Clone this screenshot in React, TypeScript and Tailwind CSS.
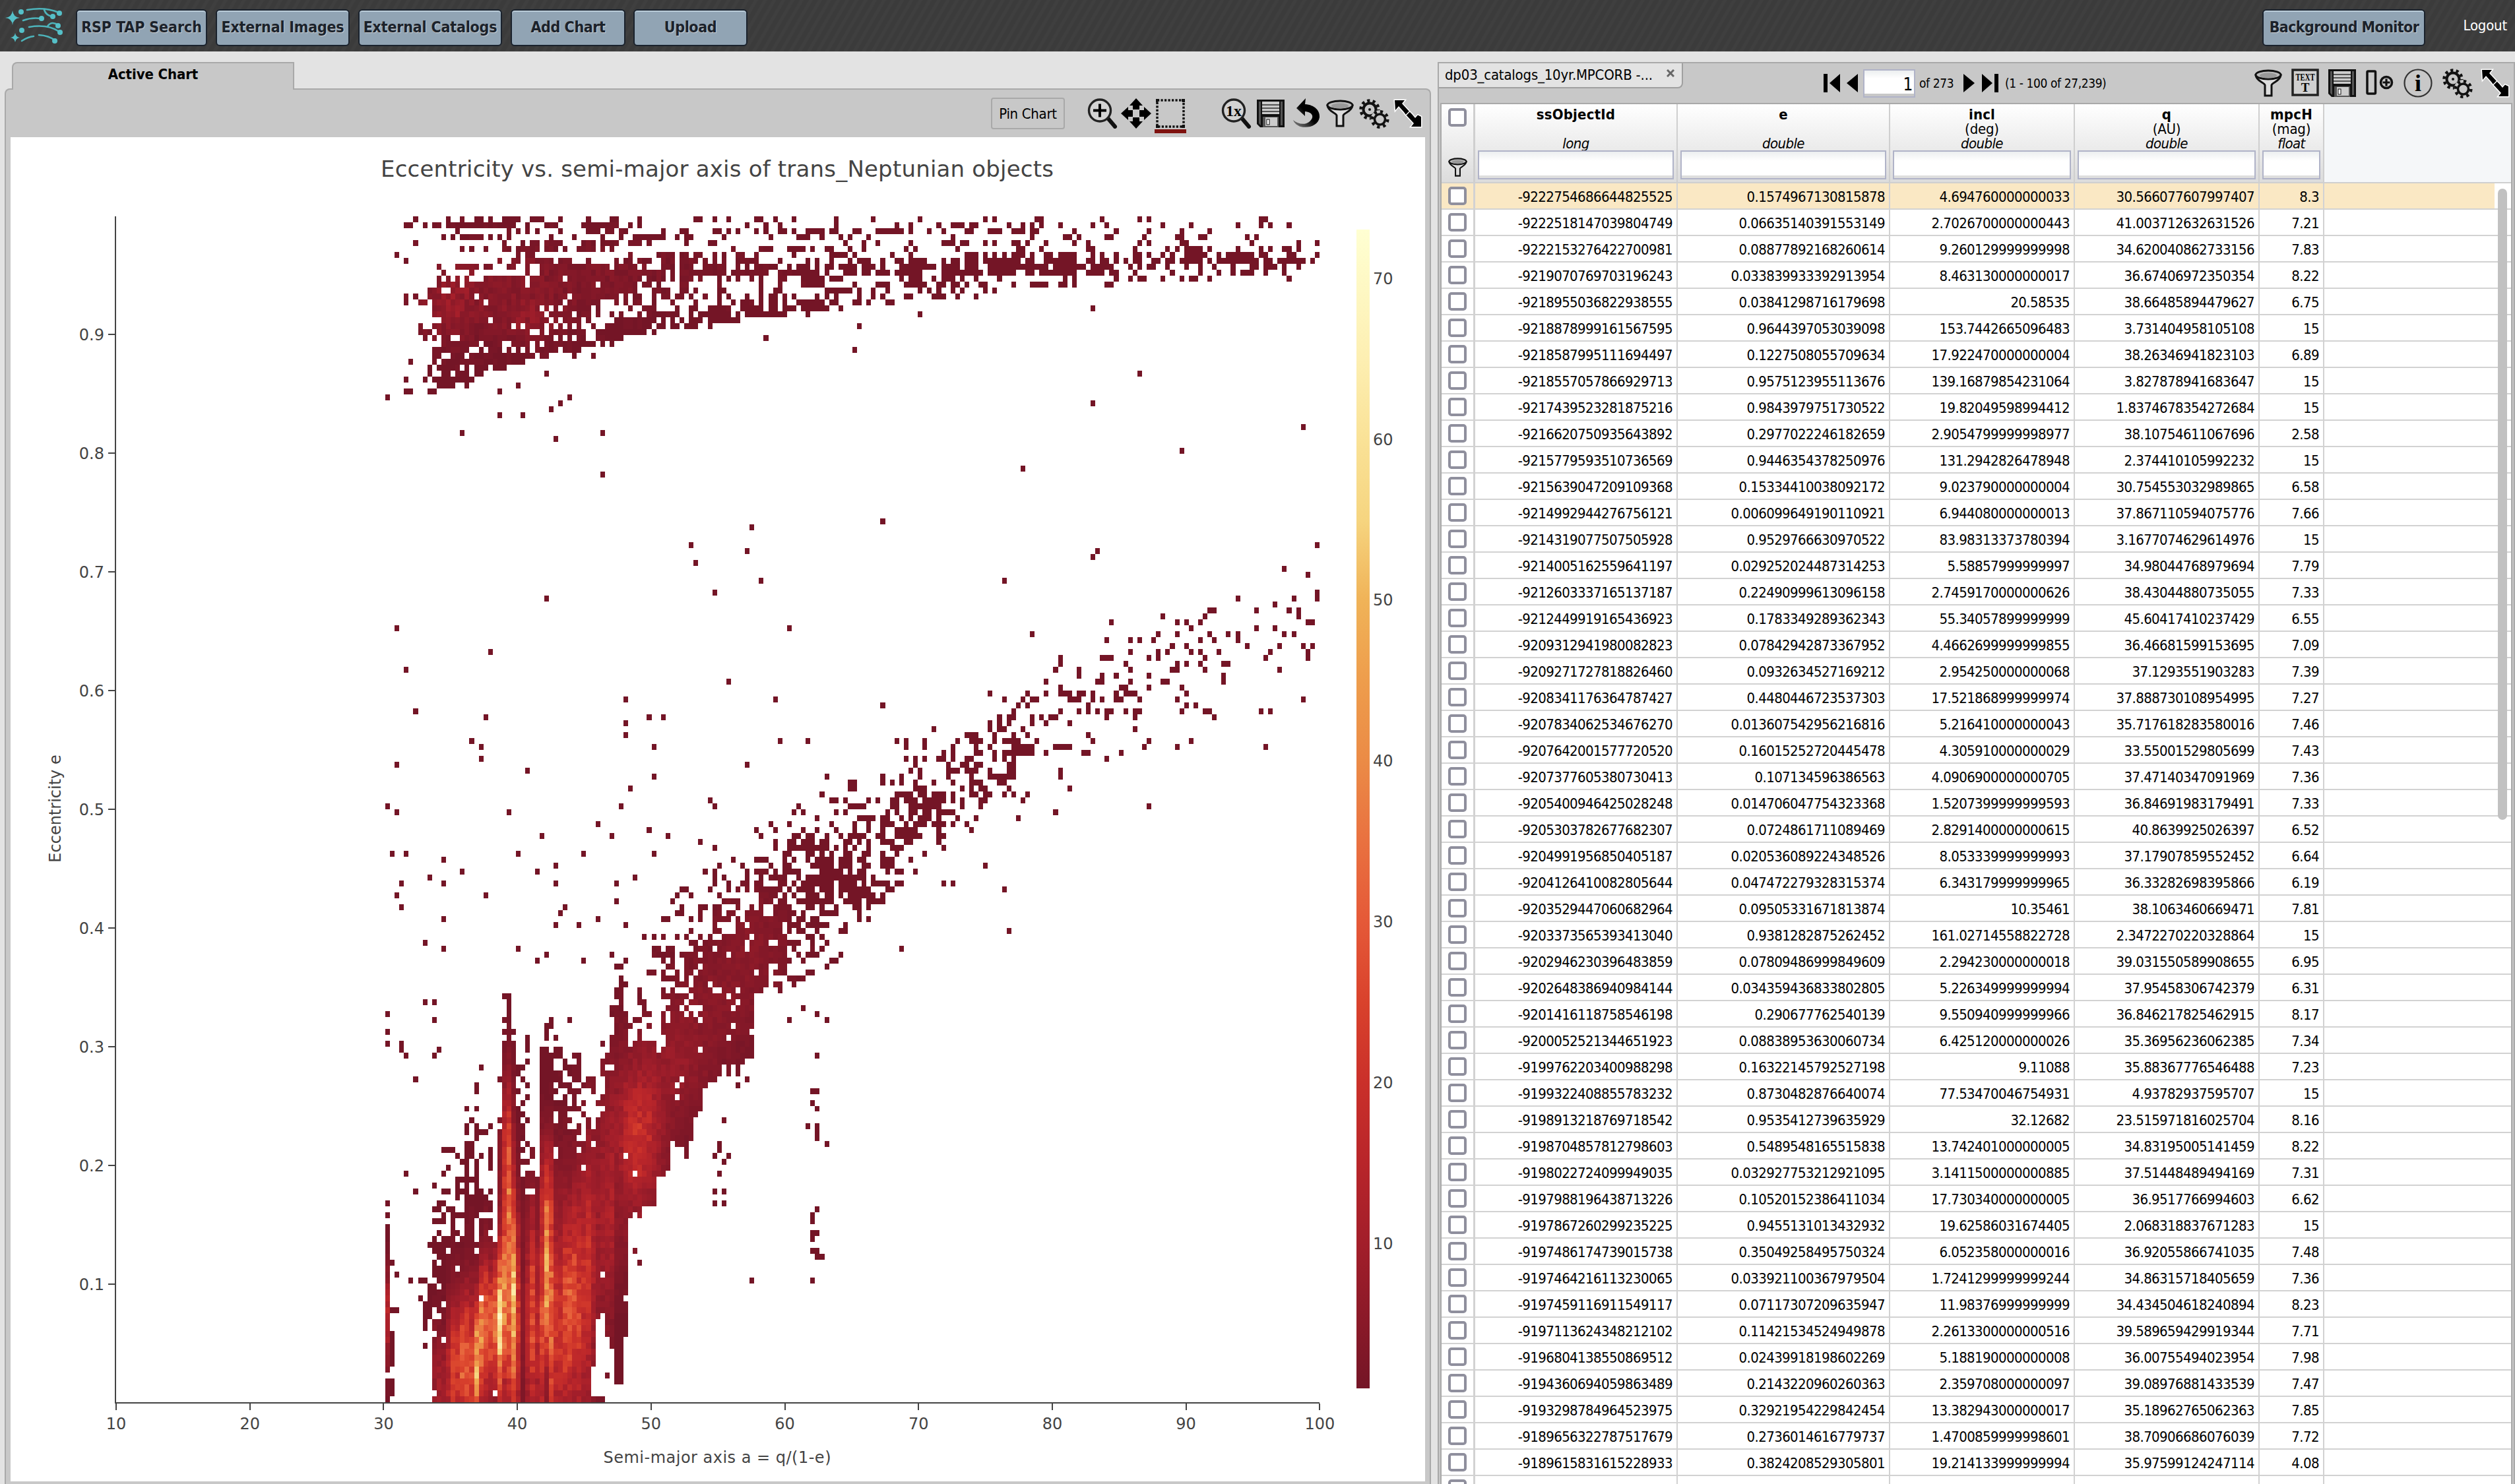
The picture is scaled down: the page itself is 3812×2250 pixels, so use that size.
import React from "react";

/* ------------------------------------------------------------------ */
/* Table data                                                          */
/* ------------------------------------------------------------------ */

const TABLE = `
-9222754686644825525 0.1574967130815878 4.694760000000033 30.566077607997407 8.3
-9222518147039804749 0.06635140391553149 2.7026700000000443 41.003712632631526 7.21
-9222153276422700981 0.08877892168260614 9.260129999999998 34.620040862733156 7.83
-9219070769703196243 0.033839933392913954 8.463130000000017 36.67406972350354 8.22
-9218955036822938555 0.03841298716179698 20.58535 38.66485894479627 6.75
-9218878999161567595 0.9644397053039098 153.7442665096483 3.731404958105108 15
-9218587995111694497 0.1227508055709634 17.922470000000004 38.26346941823103 6.89
-9218557057866929713 0.9575123955113676 139.16879854231064 3.827878941683647 15
-9217439523281875216 0.9843979751730522 19.82049598994412 1.8374678354272684 15
-9216620750935643892 0.2977022246182659 2.9054799999998977 38.10754611067696 2.58
-9215779593510736569 0.9446354378250976 131.2942826478948 2.374410105992232 15
-9215639047209109368 0.15334410038092172 9.023790000000004 30.754553032989865 6.58
-9214992944276756121 0.006099649190110921 6.944080000000013 37.867110594075776 7.66
-9214319077507505928 0.9529766630970522 83.98313373780394 3.1677074629614976 15
-9214005162559641197 0.029252024487314253 5.58857999999997 34.98044768979694 7.79
-9212603337165137187 0.22490999613096158 2.7459170000000626 38.43044880735055 7.33
-9212449919165436923 0.1783349289362343 55.34057899999999 45.60417410237429 6.55
-9209312941980082823 0.07842942873367952 4.4662699999999855 36.46681599153695 7.09
-9209271727818826460 0.0932634527169212 2.954250000000068 37.1293551903283 7.39
-9208341176364787427 0.4480446723537303 17.521868999999974 37.888730108954995 7.27
-9207834062534676270 0.013607542956216816 5.216410000000043 35.717618283580016 7.46
-9207642001577720520 0.16015252720445478 4.305910000000029 33.55001529805699 7.43
-9207377605380730413 0.107134596386563 4.0906900000000705 37.47140347091969 7.36
-9205400946425028248 0.014706047754323368 1.5207399999999593 36.84691983179491 7.33
-9205303782677682307 0.0724861711089469 2.8291400000000615 40.8639925026397 6.52
-9204991956850405187 0.020536089224348526 8.053339999999993 37.17907859552452 6.64
-9204126410082805644 0.047472279328315374 6.343179999999965 36.33282698395866 6.19
-9203529447060682964 0.09505331671813874 10.35461 38.1063460669471 7.81
-9203373565393413040 0.9381282875262452 161.02714558822728 2.3472270220328864 15
-9202946230396483859 0.07809486999849609 2.294230000000018 39.031550589908655 6.95
-9202648386940984144 0.034359436833802805 5.226349999999994 37.95458306742379 6.31
-9201416118758546198 0.290677762540139 9.550940999999966 36.846217825462915 8.17
-9200052521344651923 0.08838953630060734 6.425120000000026 35.36956236062385 7.34
-9199762203400988298 0.16322145792527198 9.11088 35.88367776546488 7.23
-9199322408855783232 0.8730482876640074 77.53470046754931 4.93782937595707 15
-9198913218769718542 0.9535412739635929 32.12682 23.515971816025704 8.16
-9198704857812798603 0.5489548165515838 13.742401000000005 34.83195005141459 8.22
-9198022724099949035 0.032927753212921095 3.1411500000000885 37.51448489494169 7.31
-9197988196438713226 0.10520152386411034 17.730340000000005 36.9517766994603 6.62
-9197867260299235225 0.9455131013432932 19.62586031674405 2.068318837671283 15
-9197486174739015738 0.35049258495750324 6.052358000000016 36.92055866741035 7.48
-9197464216113230065 0.033921100367979504 1.7241299999999244 34.86315718405659 7.36
-9197459116911549117 0.07117307209635947 11.98376999999999 34.434504618240894 8.23
-9197113624348212102 0.11421534524949878 2.2613300000000516 39.589659429919344 7.71
-9196804138550869512 0.02439918198602269 5.188190000000008 36.00755494023954 7.98
-9194360694059863489 0.2143220960260363 2.359708000000097 39.08976881433539 7.47
-9193298784964523975 0.32921954229842454 13.382943000000017 35.18962765062363 7.85
-9189656322787517679 0.2736014616779737 1.4700859999998601 38.70906686076039 7.72
-9189615831615228933 0.3824208529305801 19.214133999999994 35.97599124247114 4.08
`
  .trim()
  .split("\n")
  .map((line) => line.trim().split(" "));

/* ------------------------------------------------------------------ */
/* Heat map data: 200 x 200 bins                                       */
/* ------------------------------------------------------------------ */

const N = 200;
const X0 = 584;
const X1 = 2000;
const Y0 = 328;
const Y1 = 2126;

/* Each tile lists filled runs as "y: x1-x2,x1-x2"; `col` and `row` convert tile units to bins. */
const UPPER_LEFT = `
97:218-231,305-318,343-354,378-402,416-427,455-503,528-562,601-614,674-687,737-760,811-823,960-984,1009-1018,1047-1057,1121-1143,1169-1180,1218-1231,1329-1342,1427-1441,1552-1562
122:193-217,243-255,267-294,305-490,514-526,564-601,665-760,786-799,811-823,1096-1106,1145-1155,1180-1192,1329-1342,1490-1503,1528-1538
149:330-342,465-478,490-503,514-526,538-551,601-614,674-711,723-750,760-785,873-882,921-945,1009-1032,1047-1057,1071-1081,1121-1130,1145-1155,1180-1206,1218-1231,1256-1305,1316-1342,1379-1402,1441-1514,1528-1538
176:294-305,319-329,343-402,416-427,441-453,465-478,577-587,640-650,713-723,760-773,799-882,911-921,933-960,1033-1047,1155-1168,1232-1267,1292-1305,1343-1353,1367-1377,1416-1427
203:218-231,455-465,504-514,528-551,564-614,665-699,713-760,786-823,835-848,935-945,995-1018,1354-1367,1402-1415,1441-1451,1528-1538
230:343-354,367-378,402-416,455-478,490-551,564-601,614-625,650-699,713-723,737-750,1058-1070,1131-1168,1207-1256,1267-1280,1305-1329,1367-1377,1402-1415,1514-1528,1538-1552
257:169-183,490-503,514-538,786-799,860-911,921-945,960-984,1009-1018,1033-1047,1071-1096,1121-1131,1218-1231,1316-1367,1379-1391,1477-1490,1528-1538
284:193-207,441-453,478-503,514-587,601-638,674-687,750-760,774-799,811-848,873-911,921-945,950-970,984-995,1009-1018,1033-1047,1071-1131,1180-1192,1256-1267,1280-1292,1316-1329,1367-1377,1391-1427,1451-1465,1490-1514,1538-1562
311:281-294,330-391,402-427,465-490,514-526,551-737,750-811,823-835,873-911,921-945,950-960,984-1047,1071-1081,1096-1106,1121-1180,1207-1218,1232-1267,1280-1292,1305-1329,1343-1391,1402-1441,1451-1465,1502-1562
338:294-305,367-378,514-526,551-882,897-911,921-1047,1058-1155,1180-1292,1305-1316,1354-1391,1402-1427,1441-1475,1490-1562
365:281-294,305-318,330-342,354-366,402-514,528-614,625-823,835-882,897-911,921-960,970-984,1020-1033,1047-1057,1071-1081,1106-1121,1131-1145,1180-1206,1243-1305,1316-1353,1502-1514,1538-1552
392:281-342,354-514,528-699,711-811,823-848,860-873,921-945,1020-1033,1131-1145,1180-1192,1243-1305,1379-1391,1441-1475,1514-1528,1538-1562
419:257-294,318-811,848-897,921-945,960-970,1020-1047,1131-1145,1169-1192,1305-1377,1391-1402,1427-1441,1465-1475,1552-1562
446:193-207,218-231,257-378,391-625,640-760,774-785,799-823,848-860,873-897,911-935,945-960,984-995,1020-1033,1047-1057,1096-1106,1131-1145,1155-1180,1194-1206,1218-1231,1280-1292,1305-1316,1329-1342,1391-1402,1427-1441,1451-1465,1514-1538
473:193-207,231-255,267-402,416-614,625-711,750-760,774-785,799-823,848-860,897-911,960-970,1020-1033,1058-1070,1081-1121,1131-1145,1155-1180,1194-1206,1232-1305,1316-1342,1379-1402,1416-1427,1465-1490
500:267-551,564-571,587-601,614-687,699-711,786-799,823-860,911-921,945-970,995-1057,1081-1145,1155-1180,1194-1231,1243-1316,1343-1353
527:267-571,577-638,650-687,699-711,737-750,760-774,811-823,835-921,945-960,970-1057,1071-1081,1096-1206,1256-1267,1552-1562
554:294-416,427-577,587-601,614-662,674-687,750-860,873-884,897-911,921-935,945-984,995-1081
581:231-243,267-478,490-503,514-562,577-587,601-614,625-638,650-662,687-699,723-848,860-884,897-921,935-970,995-1009,1391-1402
608:231-267,281-526,551-564,577-674,699-835,848-860
635:243-255,267-281,294-318,343-587,601-614,625-638,650-674,699-774,1145-1155
662:294-391,402-453,478-526,538-551,564-699,713-723,737-750
689:267-366,391-402,416-455,465-478,490-503,514-528,538-601,614-662,1379-1391
716:267-294,318-354,367-538,551-577,640-650,687-699
743:207-218,267-281,294-514
770:257-267,281-342,354-366,378-416,427-465
797:257-267,294-318,330-366,378-402,564-577
824:193-207,243-255,267-378
851:281-329,354-366,490-503
878:193-217,257-280,441-453
905:146-159,625-638
932:601-614
959:577-587
986:441-453,504-514
1068:343-354,713-723
1095:587-601
1257:713-723
1473:1451-1465
1496:1106-1119`;

const UPPER_RIGHT = `
67:215-229,241-257,367-394,563-575,673-687,699-715,1033-1060
93:76-88,120-159,174-201,284-299,327-338,355-367,381-394,437-452,535-547,575-590,743-755,825-841,966-978,1033-1048,1060-1076,1118-1131
120:49-61,88-103,159-186,229-268,300-338,355-381,480-492,602-617,699-715,798-812,880-896
147:120-131,355-367,453-480,492-508,575-602,687-699,787-812,853-880,994-1005,1020-1033
174:88-131,147-174,215-229,241-257,300-327,340-355,394-409,480-492,520-535,673-687,699-715,798-825,1005-1020,1146-1158,1201-1213
200:131-147,311-338,381-394,520-547,661-673,755-770,787-798,812-868,880-896,966-978,1033-1048,1060-1076,1103-1131,1146-1158
228:159-201,215-229,241-257,268-284,300-338,355-367,394-421,437-492,535-547,563-575,602-617,661-687,699-715,743-755,770-787,812-880,908-922,935-1020,1033-1060,1118-1146,1201-1213
255:0-49,88-103,120-147,159-201,215-327,340-367,394-492,520-547,563-590,602-617,633-645,661-687,715-743,755-787,798-868,880-896,908-1033,1048-1076,1088-1173,1186-1201
282:0-76,88-147,159-201,229-409,421-520,535-602,645-661,673-687,699-727,755-770,812-825,853-868,896-908,950-966,1005-1033,1048-1088,1103-1118,1146-1158
309:88-213,229-311,340-367,381-492,520-575,590-617,661-673,770-787,853-868,908-922,950-966,978-1020,1048-1060,1103-1118
335:0-33,61-76,88-131,147-159,186-201,257-268,453-465,480-492,602-617,645-661,673-699,743-755,798-812,825-853,880-896,1118-1131
362:0-21,33-49,76-103,120-147,159-174,201-229,300-311,355-409,437-465,480-492,575-602
389:21-33,49-61,76-88,120-131,147-159,215-229,241-257
416:61-103,131-147,186-201
470:535-547
497:21-33
767:673-687
902:535-547
1010:1158-1173
1118:798-812
1200:327-338`;

const MIDDLE = `
17:1523-1533
39:81-92,966-978
61:955-966
105:1439-1452
127:1499-1510
149:115-128,729-742
193:0-8,1523-1533
215:1322-1333,1463-1475,1523-1533
237:1416-1427
259:1249-1273,1369-1380,1452-1463,1476-1487
281:1132-1143,1239-1249,1476-1487
303:1002-1013,1168-1180,1192-1203,1227-1239,1499-1523
325:188-199,1203-1216,1369-1380,1416-1427
347:802-813,1118-1132,1168-1180,1249-1262,1296-1309,1322-1333,1439-1452,1463-1475
369:989-1002,1048-1061,1072-1085,1108-1118,1227-1239,1262-1273,1322-1333
391:1155-1168,1192-1203,1345-1356,1427-1439,1487-1499,1510-1523
413:1048-1061,1118-1132,1143-1155,1203-1216,1227-1239,1273-1285,1403-1416,1499-1510
435:873-885,978-1013,1096-1108,1118-1132,1239-1249,1392-1403,1499-1510
457:873-885,1040-1048,1168-1180,1192-1203,1227-1239,1285-1309
479:860-873,919-931,1048-1061,1155-1180,1239-1249,1427-1439
501:919-931,978-989,1013-1025,1096-1108,1285-1296
523:35-45,836-848,966-989,1048-1061,1132-1155,1285-1296
545:873-885,1025-1048,1096-1108,1180-1192
567:696-706,790-802,836-848,873-908,919-943,955-966,1013-1025,1037-1072,1192-1203
589:152-162,729-742,779-790,802-826,895-931,955-966,978-989,1013-1037,1072-1085,1168-1180,1487-1499
611:422-435,766-779,790-802,943-955,1192-1203,1216-1227
633:755-766,873-885,919-931,943-955,966-978,989-1013,1040-1048,1061-1085,1180-1192,1239-1262,1380-1392,1403-1416
655:719-729,742-766,802-813,826-836,848-873,989-1002,1061-1072,1262-1273
677:696-706,719-729,742-755,802-813,836-848,895-908
699:553-565,696-706,719-742,779-790,1061-1072
721:636-671,706-719,755-766,790-802,943-955
743:162-175,235-245,459-472,482-495,529-541,612-625,648-682,706-719,729-779,813-826,955-966,1096-1108,1203-1216
765:482-495,529-541,602-612,659-671,696-706,755-813,860-908,1085-1096,1168-1180,1392-1403
787:575-588,602-612,659-682,706-719,729-813,836-848,931-955,1025-1037
809:482-495,505-518,529-541,565-588,602-612,636-659,706-719,729-742,755-766,989-1002
831:81-92,505-518,588-602,625-648,659-682,742-766
853:495-505,518-529,588-625,636-671,696-706,742-766,873-885
875:281-292,422-435,472-482,518-529,588-602,648-659,696-766,873-885
897:342-366,422-435,445-459,472-482,505-518,553-565,602-612,648-682,719-742
919:342-366,505-541,625-636,648-659,671-696,742-755,895-908
941:269-281,459-505,518-541,553-588,602-612,648-671,682-706,729-742,755-766,790-802
963:292-318,330-342,389-400,412-422,445-472,482-518,529-588,602-612,625-636,671-696,779-790
985:0-8,212-222,342-389,445-472,495-575,625-636,671-682,1096-1108
1007:199-212,222-235,305-318,330-342,435-445,459-472,495-518,529-553,565-612,860-873
1029:257-269,366-412,422-445,472-482,495-505,518-553,565-575,612-625,659-671,766-779
1051:139-152,188-199,292-305,354-366,389-400,422-459,482-495,505-541,553-588,602-612,636-648
1073:106-115,152-162,222-235,257-269,305-318,354-366,389-400,422-435,459-518,565-575,648-659
1095:115-128,199-222,235-257,281-292,318-330,342-389,412-435,459-529,565-588
1117:152-162,188-212,222-257,269-292,330-354,366-377,389-400,422-459,482-505,565-575
1139:0-8,152-162,188-292,305-318,330-342,354-366,389-400,445-482,575-588
1161:175-199,235-257,269-281,292-305,330-354,377-400,422-435,459-472,529-541
1183:45-57,106-139,175-188,199-212,235-245,257-305,318-354,366-389,422-459,495-505
1205:8-20,68-81,139-152,175-199,245-305,318-354,377-400,422-459,682-696
1227:0-8,81-92,106-139,152-162,175-222,269-330,342-354,366-389,435-445,459-482,505-518
1249:0-8,20-35,81-92,115-128,139-188,212-222,235-389,400-412
1271:0-8,35-45,68-92,106-128,162-188,199-212,222-305,318-365,377-389,400-445,459-482,575-588,602-612
1293:35-45,57-68,81-92,106-175,188-199,212-257,269-305,318-400,435-459,729-742
1315:8-20,115-162,175-188,199-212,235-269,281-305,318-330,342-412,424-435
1337:20-68,115-152,162-188,212-305,330-377,389-435
1359:0-20,57-68,92-106,115-128,152-199,235-257,269-281,305-318,354-377,389-400
1381:0-20,35-57,81-128,152-212,222-235,269-318,366-377
1403:0-45,57-68,81-199,212-235,245-269,366-377,389-400
1425:0-8,57-81,92-175,188-222,235-292,330-342
1447:0-20,57-175,188-199,212-235,257-269,318-342,742-755
1469:20-92,106-188,235-257,269-281
1491:0-81,92-139,162-222,245-257,281-292
1513:8-81,92-188,199-212,245-257,269-281,472-482
1535:0-35,45-188,212-222,235-269,318-330
1557:0-199,222-235,292-318`;

const LOWER = `
5:583-597,793-806,1057-1070
22:1057-1070
40:904-916,974-988,1012-1029
60:194-210,988-1012,1030-1057
78:472-487,888-903,1002-1029,1042-1057
97:556-570,752-766,888-903,932-946,960-986,1002-1016,1030-1057
115:668-680,793-806,904-918,932-946,988-1057
134:766-793,918-932,932-946,974-1016,1030-1057,1390-1402
152:860-888,904-916,946-960,974-1002,1030-1057,1237-1280,1334-1362
170:780-793,904-960,974-988,1002-1057,1280-1334
188:780-806,946-974,1237-1264,1292-1305
207:1250-1264
245:194-210,222-238
263:1320-1334
282:86-100,1362-1375
300:222-238,1280-1292,1390-1402
338:86-100
375:86-100,127-140
394:127-140,238-252
412:140-154,222-238,1362-1375
450:363-375
487:168-182,1154-1166
505:1127-1140
523:1348-1375
560:1348-1362
579:1362-1375
616:1084-1100
635:1334-1347,1362-1375
653:348-390,1362-1375
672:1362-1365
690:1070-1082,1390-1402
709:252-292,1070-1082
727:1057-1068,1100-1111
746:1084-1100
783:140-154,1070-1082
820:222-238,292-306
839:168-182,1057-1070,1084-1100
877:1057-1070,1084-1100,86-100
895:222-250,1362-1375,832-846
914:86-100,1348-1362,832-846
932:222-250,1348-1362
970:1348-1375
988:1348-1362
1006:210-236
1025:1348-1375,820-832,222-236
1043:1362-1390
1062:832-846,100-113,222-236
1099:113-127
1118:155-168,182-210,1166-1182,1348-1362
1136:210-222
1155:210-222
1173:182-195,210-222
1192:194-222
1211:100-127,194-222
1229:194-222
1248:194-210
1267:194-210
1285:100-113
1304:100-113
1322:100-113,194-210
1341:100-113
1360:100-113
1378:100-113,766-780
1415:735-750
1434:100-113
1452:100-113
1471:100-113
1490:683-735`;

const OUTLIERS = `431,340 433,350 444,371 340,373 247,391 307,406 253,417 259,443 304,447 294,462 299,466 299,473 330,480 247,478 389,437 389,450 389,458 405,449 407,464 407,485 392,490 412,447 241,504 247,507 317,506 386,503 373,515 381,521 404,518 416,521 407,531 245,534 252,534 276,535 323,534 337,523 347,538 287,545 269,546 277,550 335,545 346,549 385,551 396,548 247,559 251,564 304,560 351,565 350,570 361,575 374,572 384,562 276,572 415,573 250,549 364,534 277,590 335,600 402,585 443,500 436,526 428,553 432,560 438,566 425,571 441,545 421,560`;

/* Per column, from column 10: [scattered top, solid top, bottom] in LOWER units. */
const PROFILE: number[][] = [
  [925, 1080, 1500], [850, 1080, 1500], [780, 1000, 1500], [755, 1075, 1500], [900, 910, 1500],
  [665, 1110, 1500], [740, 1000, 1500], [535, 700, 1500], [590, 850, 1500], [500, 1075, 1500],
  [640, 1040, 1500], [770, 980, 1500], [590, 1040, 1500], [980, 1030, 1500], [425, 715, 1500],
  [200, 370, 1500], [200, 235, 1500], [330, 390, 1500], [410, 570, 1500], [310, 800, 1500],
  [345, 850, 1500], [680, 850, 1500], [740, 820, 1500], [295, 400, 1500], [295, 400, 1500],
  [300, 590, 1500], [310, 780, 1500], [350, 600, 1500], [400, 600, 1500], [295, 650, 1500],
  [310, 650, 1500], [420, 720, 1500], [490, 780, 1500], [480, 700, 1480], [480, 720, 1385],
  [480, 620, 1240], [360, 600, 1230], [350, 480, 1290], [260, 350, 1340], [200, 260, 1440],
  [160, 240, 1440], [240, 300, 1300], [300, 400, 930], [205, 400, 905], [205, 400, 895],
  [250, 400, 880], [255, 400, 880], [300, 410, 880], [400, 430, 790], [200, 420, 790],
  [200, 340, 780], [180, 210, 690], [180, 260, 700], [200, 300, 700], [130, 220, 745],
  [124, 220, 690], [124, 230, 600], [124, 190, 580], [124, 170, 520], [124, 150, 495],
  [124, 125, 490], [124, 125, 475], [124, 125, 440], [124, 125, 470], [124, 125, 440],
  [124, 125, 470], [124, 125, 440], [124, 125, 430], [124, 125, 430], [124, 125, 225],
  [124, 125, 220], [124, 125, 200], [120, 122, 124], [120, 122, 124], [124, 130, 155],
  [124, 130, 150],
];

/* Per column, from column 10: [peak count, peak row, spread]. */
const PEAKS: number[][] = [
  [7, 3, 7], [9, 2, 7], [8, 3, 6], [14, 4, 8], [22, 5, 8], [21, 5, 8], [31, 6, 7], [31, 6, 8],
  [24, 5, 9], [50, 6, 7], [39, 11, 7], [32, 12, 8], [29, 12, 7], [34, 13, 7], [60, 13, 8],
  [42, 16, 9], [36, 18, 13], [51, 16, 11], [20, 14, 12], [4, 14, 12], [14, 13, 12], [27, 14, 11],
  [15, 12, 12], [27, 13, 11], [50, 21, 9], [34, 14, 12], [20, 12, 12], [20, 12, 12], [27, 14, 11],
  [30, 14, 10], [26, 16, 11], [22, 14, 12], [18, 16, 12], [17, 18, 14], [9, 18, 14], [5, 20, 14],
  [5, 25, 14], [6, 25, 12], [6, 28, 12],
];

const hash = (c: number, r: number) => {
  let h = Math.imul(c + 11, 374761393) ^ Math.imul(r + 7, 668265263);
  h = Math.imul(h ^ (h >>> 13), 1274126177);
  return ((h ^ (h >>> 16)) >>> 0) / 4294967296;
};

const bell = (d: number, s: number) => Math.exp(-(d * d) / (2 * s * s));

/* Counts in a bin; row 0 is the bottom one. */
function count(c: number, r: number): number {
  let v = 1;
  if (r > 150) {
    v += 5.5 * bell(c - 14, 4) * bell(r - 184, 4) + 5 * bell(c - 30, 4) * bell(r - 182, 2.5);
    v += 3 * bell(c - 26, 16) * bell(r - 187, 5) + 1.5 * bell(c - 50, 20) * bell(r - 190, 3);
    return v * (0.5 + hash(r, c) * 0.9);
  }
  const p = PEAKS[c - 10];
  if (p) v += p[0] * bell(r - p[1], p[2]);
  if (c >= 24 && c <= 27) v += [4, 17, 22, 6][c - 24] * bell(r - 40, 9);
  if (c >= 33 && c <= 35) v += 9 * bell(r - 36, 6);
  if (c === 0) v += 14 * bell(r - 14, 5);
  v += 14 * bell(c - 54, 2.8) * bell(r - 43, 7) + 5 * bell(c - 46, 8) * bell(r - 32, 9);
  v += 6 * bell(c - 53, 6) * bell(r - 50, 8) + 5 * bell(c - 63, 5) * bell(r - 57, 6);
  v += 4 * bell(c - 72, 8) * bell(r - 68, 7) + 3.5 * bell(c - 79, 5) * bell(r - 79, 5);
  return v * (0.72 + hash(r, c) * 0.5);
}

const STOPS: [number, number, number, number][] = [
  [1, 116, 21, 38], [5, 137, 25, 40], [10, 162, 30, 42], [15, 184, 37, 42], [20, 202, 48, 42],
  [25, 217, 66, 44], [30, 229, 89, 56], [35, 233, 113, 64], [40, 235, 139, 70], [45, 238, 157, 76],
  [50, 240, 179, 88], [55, 246, 213, 128], [60, 250, 226, 151], [65, 253, 239, 178], [73, 255, 255, 210],
];

function shade(v: number) {
  for (let i = 1; i < STOPS.length; i++) {
    const a = STOPS[i - 1];
    const b = STOPS[i];
    if (v <= b[0]) {
      const t = Math.max(0, (v - a[0]) / (b[0] - a[0]));
      const m = (k: number) => Math.round(a[k] + (b[k] - a[k]) * t);
      return `rgb(${m(1)},${m(2)},${m(3)})`;
    }
  }
  return "rgb(255,255,210)";
}

function buildHeat() {
  const on = new Set<number>();
  const put = (c: number, r: number) => {
    if (c >= 0 && c < N && r >= 0 && r < N) on.add(r * N + c);
  };
  const tile = (src: string, col: (x: number) => number, row: (y: number) => number) => {
    for (const line of src.trim().split("\n")) {
      const [y, runs] = line.split(":");
      const r = row(+y);
      for (const run of runs.split(",")) {
        const [a, b] = run.split("-").map(Number);
        const c0 = Math.round(col(a));
        const c1 = Math.max(c0 + 1, Math.round(col(b)));
        for (let c = c0; c < c1; c++) put(c, r);
      }
    }
  };
  tile(UPPER_LEFT, (x) => (x - 146) / 12.33, (y) => 199 - Math.floor((y - 84) / 27));
  tile(UPPER_RIGHT, (x) => (x + 1560) / 13.88, (y) => 199 - Math.floor((y - 54) / 27));
  tile(MIDDLE, (x) => (x + 827) / 11.81, (y) => Math.floor((3200 - y) / 22.05));
  const lowRow = (y: number) => Math.floor((1500 - y) / 18.6);
  tile(LOWER, (x) => (x - 86) / 13.88, lowRow);
  for (const pt of OUTLIERS.split(" ")) {
    const [x, y] = pt.split(",").map((n) => +n * 2.4318);
    put(Math.floor((x - X0) / 7.08), Math.floor((Y1 - y) / 8.99));
  }
  for (let r = 0; r < 30; r++) if (r !== 4) put(0, r);
  PROFILE.forEach(([top, solid, bottom], i) => {
    const c = i + 10;
    const rt = lowRow(top);
    const rs = lowRow(solid);
    const rb = Math.round((1500 - bottom) / 18.6);
    for (let r = rb; r <= rt; r++) {
      const inner = c > 62 && r > 58 ? 0.9 : c < 14 ? 0.9 : 0.995;
      const p = r <= rs ? inner : 0.68 - 0.4 * ((r - rs) / (rt - rs + 1));
      if (hash(c, r) < p) put(c, r);
    }
  });
  for (let c = 56; c < 70; c++)
    for (let r = 74; r < 96; r++)
      if (hash(c, r) < 0.42 - (r - 74) * 0.026 - (70 - c) * 0.012) put(c, r);

  const paths = new Map<string, string>();
  on.forEach((k) => {
    const c = k % N;
    const r = (k - c) / N;
    const fill = shade(Math.round(count(c, r)));
    const xa = Math.round(X0 + (c * (X1 - X0)) / N);
    const xb = Math.round(X0 + ((c + 1) * (X1 - X0)) / N);
    const ya = Math.round(Y1 - ((r + 1) * (Y1 - Y0)) / N);
    const yb = Math.round(Y1 - (r * (Y1 - Y0)) / N);
    paths.set(fill, (paths.get(fill) ?? "") + `M${xa} ${ya}H${xb}V${yb}H${xa}Z`);
  });
  return [...paths.entries()];
}

const HEAT = buildHeat();

function Chart() {
  const xt = [10, 20, 30, 40, 50, 60, 70, 80, 90, 100];
  const yt = [1, 2, 3, 4, 5, 6, 7, 8, 9];
  const ct = [10, 20, 30, 40, 50, 60, 70];
  return (
    <svg
      viewBox="16 208 2144 2038"
      className="block h-[2038px] w-[2144px] bg-white font-['DejaVu_Sans',sans-serif]"
      fill="#444"
      fontSize="24"
    >
      <defs>
        <linearGradient id="scale" x1="0" y1="1" x2="0" y2="0">
          {STOPS.map((s) => (
            <stop key={s[0]} offset={(s[0] - 1) / 72} stopColor={`rgb(${s[1]},${s[2]},${s[3]})`} />
          ))}
        </linearGradient>
      </defs>
      <text x="1087" y="268" textAnchor="middle" fontSize="34" textLength="1020">
        Eccentricity vs. semi-major axis of trans_Neptunian objects
      </text>
      <g shapeRendering="crispEdges">
        {HEAT.map(([fill, d]) => (
          <path key={fill} d={d} fill={fill} />
        ))}
        <rect x="174" y="328" width="2" height="1800" />
        <rect x="174" y="2126" width="1826" height="2" />
        {xt.map((v, i) => (
          <rect key={v} x={Math.round(175 + i * 202.7)} y="2128" width="2" height="10" />
        ))}
        {yt.map((v) => (
          <rect key={v} x="164" y={2126 - v * 180} width="10" height="2" />
        ))}
      </g>
      {xt.map((v, i) => (
        <text key={v} x={176 + i * 202.7} y="2167" textAnchor="middle">{v}</text>
      ))}
      {yt.map((v) => (
        <text key={v} x="158" y={2136 - v * 180} textAnchor="end">{`0.${v}`}</text>
      ))}
      <text x="1087" y="2218" textAnchor="middle" textLength="345">Semi-major axis a = q/(1-e)</text>
      <text transform="translate(92 1226) rotate(-90)" textAnchor="middle">Eccentricity e</text>
      <rect x="2056" y="348" width="20" height="1757" fill="url(#scale)" />
      {ct.map((v) => (
        <text key={v} x="2081" y={1894 - (v / 10 - 1) * 243.9}>{v}</text>
      ))}
    </svg>
  );
}

/* ------------------------------------------------------------------ */
/* Icons                                                               */
/* ------------------------------------------------------------------ */

type P = { className?: string };

const Logo = () => (
  <svg viewBox="0 0 110 78" className="h-[78px] w-[115px] shrink-0" preserveAspectRatio="xMinYMin" fill="#55c0c8" stroke="#4db3ba" strokeLinecap="round">
    <path stroke="none" d="M19 16Q20 26 30 27Q20 28 19 38Q18 28 8 27Q18 26 19 16ZM23 50Q24 56 30 57Q24 58 23 64Q22 58 16 57Q22 56 23 50Z" />
    <g fill="none" strokeWidth="2.6">
      <path d="M41 15Q68 10 89 19M67 15Q70 24 80 25M35 31Q48 26 62 28M44 41Q72 36 90 48M72 40Q78 31 88 38M33 62Q42 56 51 55M59 53Q74 54 83 61" />
    </g>
    <g stroke="none">
      <circle cx="32" cy="18" r="4" /><circle cx="90" cy="20" r="4" /><circle cx="80" cy="25" r="4" />
      <circle cx="63" cy="28" r="4" /><circle cx="33" cy="46" r="4" /><circle cx="88" cy="39" r="4" />
      <circle cx="91" cy="49" r="4" /><circle cx="83" cy="62" r="4" />
    </g>
  </svg>
);

const Lens = ({ label, className }: P & { label: string }) => (
  <svg viewBox="0 0 46 46" className={className}>
    <path d="M31 30L42 43" stroke="#111" strokeWidth="6" strokeLinecap="round" />
    <circle cx="19" cy="18.500" r="16.500" fill="#d3d3d3" stroke="#222" strokeWidth="3.4" />
    {label === "+" ? (
      <path d="M19 8.500V28.500M9 18.500H29" stroke="#000" strokeWidth="4" />
    ) : (
      <text x="19" y="27" textAnchor="middle" fontSize="24" fontWeight="bold" fontFamily="Liberation Serif" textLength="24" lengthAdjust="spacingAndGlyphs">{label}</text>
    )}
  </svg>
);

const Move = () => (
  <svg viewBox="0 0 46 46" className="h-[46px] w-[46px]">
    <path d="M23 0L33 11H28V17H18V11H13ZM23 46L33 35H28V29H18V35H13ZM0 23L11 13V18H18V28H11V33ZM46 23L35 13V18H28V28H35V33Z" />
  </svg>
);

const Marquee = () => (
  <svg viewBox="0 0 44 44" className="h-[44px] w-[44px]" fill="none" stroke="#111" strokeWidth="3.500">
    <rect x="2" y="2" width="40" height="40" strokeDasharray="3.200 2.300" />
    <path strokeWidth="4" d="M1 5V2H5M39 2H42V5M1 39V42H5M39 42H42V39" />
  </svg>
);

const Floppy = () => (
  <svg viewBox="0 0 42 42" className="h-[42px] w-[42px]">
    <path d="M0 0H42V42H5L0 37Z" fill="#111" />
    <path d="M3 3H6V39L3 36ZM36 3H39V39H36Z" fill="#555" />
    <rect x="8" y="3" width="26" height="19" fill="#ccc" />
    <path d="M8 8H34M8 13H34M8 18H34" stroke="#555" strokeWidth="2" />
    <rect x="9" y="26" width="24" height="16" fill="#555" />
    <rect x="13" y="27" width="18" height="13" fill="#ccc" />
    <rect x="15" y="30" width="4" height="8" fill="#fff" stroke="#111" />
  </svg>
);

const Undo = () => (
  <svg viewBox="0 0 42 46" className="h-[46px] w-[42px]">
    <defs>
      <linearGradient id="undo" x1="1" y1="0" x2="0" y2="1">
        <stop offset=".5" stopColor="#000" /><stop offset="1" stopColor="#888" />
      </linearGradient>
    </defs>
    <path d="M20 0L19 9C34 10 42 19 41 29C39 41 25 46 12 43C7 41 3 38 1 33C8 39 18 41 25 36C34 29 31 21 19 20L19 27L6 15Z" fill="url(#undo)" />
  </svg>
);

const Funnel = ({ className }: P) => (
  <svg viewBox="0 0 42 42" className={className} stroke="#111" strokeWidth="3">
    <path d="M2 9C3 18 15 20 16 24V40H26V24C27 20 39 18 40 9Z" fill="#ddd" />
    <ellipse cx="21" cy="8.500" rx="19" ry="6.500" fill="#bbb" />
    <ellipse cx="21" cy="9.500" rx="13" ry="4" fill="#999" stroke="none" />
  </svg>
);

const Gears = () => (
  <svg viewBox="0 0 46 46" className="h-[46px] w-[46px]" fill="none" stroke="#111">
    <circle cx="16" cy="16" r="9.500" strokeWidth="4" />
    <circle cx="16" cy="16" r="13.500" strokeWidth="4.500" strokeDasharray="4.200 4.280" />
    <circle cx="31.500" cy="31" r="14" fill="#c8c8c8" stroke="none" />
    <circle cx="31.500" cy="31" r="8" strokeWidth="3.600" />
    <circle cx="31.500" cy="31" r="11.800" strokeWidth="4.500" strokeDasharray="4.200 5.068" />
    <circle cx="16" cy="16" r="2" fill="#111" stroke="none" />
  </svg>
);

const Expand = () => (
  <svg viewBox="0 0 44 44" className="h-[44px] w-[44px]">
    <path
      d="M2 2H17L13 7L24 19L28 23L33 29L37 24.500L42 27V42H27L31 37L19 24L16 20L8 11L3 17Z"
      fill="#000" stroke="#fff" strokeWidth="3" paintOrder="stroke"
    />
    <path d="M19 24.500L24.500 19" stroke="#fff" strokeWidth="1.500" />
  </svg>
);

const TextIcon = () => (
  <svg viewBox="0 0 42 42" className="h-[42px] w-[42px]">
    <rect x="2" y="2" width="38" height="38" fill="#d0d0d0" stroke="#222" strokeWidth="3.500" />
    <text x="21" y="18" textAnchor="middle" fontSize="15" fontWeight="bold" fontFamily="Liberation Serif" textLength="29" lengthAdjust="spacingAndGlyphs">TEXT</text>
    <text x="21" y="35" textAnchor="middle" fontSize="19" fontWeight="bold" fontFamily="Liberation Serif">T</text>
  </svg>
);

const AddColumn = () => (
  <svg viewBox="0 0 42 38" className="h-[38px] w-[42px]" stroke="#111" fill="none">
    <rect x="2" y="2" width="12.500" height="34" rx="1.500" strokeWidth="3.500" />
    <circle cx="31" cy="19" r="8.500" strokeWidth="3.500" />
    <path d="M31 13.500V24.500M25.500 19H36.500" strokeWidth="3.200" />
  </svg>
);

const InfoIcon = () => (
  <svg viewBox="0 0 44 44" className="h-[44px] w-[44px]">
    <circle cx="22" cy="22" r="20.500" fill="none" stroke="#333" strokeWidth="2.200" />
    <text x="22" y="34" textAnchor="middle" fontSize="36" fontWeight="bold" fontFamily="Liberation Serif">i</text>
  </svg>
);

/* ------------------------------------------------------------------ */
/* Panels                                                              */
/* ------------------------------------------------------------------ */

function HeaderButton({ className, label }: { className: string; label: string }) {
  return (
    <button className={`${className} mt-[14px] flex h-14 shrink-0 items-center justify-center rounded-[6px] border-2 border-[#1a222d] bg-[#91a4b4] pb-px text-[23px] leading-none font-bold whitespace-nowrap text-[#1b222b] shadow-[inset_0_2px_0_#b9cbd8] [text-shadow:1px_1px_1px_#cfcfcf]`}>
      {label}
    </button>
  );
}

function Header() {
  return (
    <header className="flex h-[78px] shrink-0 items-start bg-[#3c3c3c] bg-[repeating-linear-gradient(120deg,#3b3b3b_0px,#3b3b3b_5px,#3f3f3f_7px,#3f3f3f_10px,#3b3b3b_12px)]">
      <Logo />
      <HeaderButton className="w-[199px] tracking-[-0.1px]" label="RSP TAP Search" />
      <HeaderButton className="ml-[13px] w-[203px] tracking-[-0.2px]" label="External Images" />
      <HeaderButton className="ml-[13px] w-[218px] tracking-[-0.2px]" label="External Catalogs" />
      <HeaderButton className="ml-[13px] w-[174px] tracking-[-0.4px]" label="Add Chart" />
      <HeaderButton className="ml-[12px] w-[173px] tracking-[-0.4px]" label="Upload" />
      <HeaderButton className="ml-auto w-[247px] tracking-[-0.6px]" label="Background Monitor" />
      <span className="mt-[25px] mr-[12px] ml-[57px] text-[22px] leading-7 tracking-[-0.2px] text-white">Logout</span>
    </header>
  );
}

function ChartPanel() {
  return (
    <section className="ml-[7px] flex w-[2162px] shrink-0 flex-col pt-4">
      <div className="relative z-10 ml-[11px] flex h-[42px] w-[428px] items-center justify-center rounded-tl-[8px] border-2 border-b-0 border-[#a9a9a9] bg-[#c8c8c8] pb-[8px] text-[22px] font-bold tracking-[-0.1px]">
        Active Chart
      </div>
      <div className="-mt-[2px] flex h-[2116px] flex-col rounded-t-[8px] border-2 border-b-0 border-[#a9a9a9] bg-[#c8c8c8] px-[7px]">
        <div className="flex h-[72px] shrink-0 items-start pt-[12px] pr-[4px]">
          <div className="ml-auto flex h-12 w-[112px] items-center justify-center rounded-[4px] border-2 border-[#a9a9a9] text-[22px] tracking-[-0.3px] whitespace-nowrap">Pin Chart</div>
          <Lens label="+" className="mt-px ml-[34px] h-[46px] w-[46px]" />
          <span className="mt-px ml-[5px]"><Move /></span>
          <span className="ml-[5px] flex w-12 flex-col items-center pt-[2px]">
            <Marquee />
            <span className="mt-[2px] h-[6px] w-12 bg-[#7f120f]" />
          </span>
          <Lens label="1x" className="mt-px ml-[53px] h-[46px] w-[46px]" />
          <span className="mt-[3px] ml-[8px]"><Floppy /></span>
          <span className="mt-px ml-[12px]"><Undo /></span>
          <Funnel className="mt-[3px] ml-[9px] h-[42px] w-[42px]" />
          <span className="mt-[2px] ml-[8px]"><Gears /></span>
          <span className="mt-[2px] ml-[6px]"><Expand /></span>
        </div>
        <Chart />
      </div>
    </section>
  );
}

const Box = () => <span className="h-7 w-7 shrink-0 rounded-[5px] border-4 border-[#8f8f9d] bg-white" />;

const COLS = "grid-cols-[51px_307px_322px_280px_280px_98px_1fr]";

function HeadCell({ name, unit, type }: { name: string; unit: string; type: string }) {
  return (
    <div className="flex flex-col border-r-2 border-[#cfcfcf] bg-linear-to-b from-white to-[#dcdcdc] px-[4px] pt-[4px] text-center text-[22px] tracking-[-0.6px]">
      <b className="h-[22px] leading-[24px] tracking-[0.2px]">{name}</b>
      <span className="h-[22px] leading-[24px] tracking-[-0.2px]">{unit}</span>
      <i className="h-[22px] leading-[24px]">{type}</i>
      <div className="h-11 border-2 border-[#b0b3c8] bg-[linear-gradient(#eceff0,#fff_14px,#fff_36px,#dedede_36px)]" />
    </div>
  );
}

function Row({ cells, selected }: { cells: string[]; selected?: boolean }) {
  return (
    <div className={`grid h-10 shrink-0 ${COLS} border-b-2 border-[#d2d2d2] text-[22px] leading-[42px] tracking-[-0.6px]`}>
      <div className={`flex h-[38px] items-center justify-center border-r-[3px] border-[#d2d2d2] ${selected ? "bg-[#fae8c4]" : ""}`}><Box /></div>
      {cells.map((c, i) => (
        <div key={i} className={`h-[38px] border-r-2 border-[#d2d2d2] pr-[6px] text-right ${selected ? "bg-[#fae8c4]" : ""}`}>{c}</div>
      ))}
      <div className={`mr-[25px] h-[38px] ${selected ? "bg-[#fae8c4]" : ""}`} />
    </div>
  );
}

const PageArrow = ({ d, w }: { d: string; w: string }) => (
  <svg viewBox={`0 0 ${w} 28`} width={w} height="28" className="shrink-0"><path d={d} /></svg>
);

function TablePanel() {
  return (
    <section className="ml-[10px] flex w-[1633px] shrink-0 flex-col pt-4">
      <div className="flex h-[2156px] flex-col border-2 border-b-0 border-[#a9a9a9] bg-[#c8c8c8]">
        <div className="flex h-[60px] shrink-0 items-start">
          <div className="flex h-[38px] w-[370px] items-start rounded-br-[8px] border-r-2 border-b-2 border-[#a0a0a0] bg-[#e3e3e3] pl-[9px] text-[22px] leading-[36px] tracking-[-0.2px]">
            <span className="w-[336px] whitespace-nowrap">dp03_catalogs_10yr.MPCORB -...</span>
            <svg viewBox="0 0 12 12" className="mt-[9px] h-3 w-3" stroke="#666" strokeWidth="3"><path d="M1 1L11 11M11 1L1 11" /></svg>
          </div>
          <div className="ml-[213px] flex h-[60px] items-center text-[19px] tracking-[-0.4px] whitespace-nowrap">
            <PageArrow w="26" d="M0 0H6V28H0ZM25 0V28L9 14Z" />
            <span className="ml-[9px] flex"><PageArrow w="18" d="M17 0V28L0 14Z" /></span>
            <span className="ml-[7px] flex h-[43px] w-[79px] items-center justify-end border-2 border-[#b0b3c8] bg-[linear-gradient(#eceff0,#fff_12px,#fff_35px,#c8c8c8_35px)] pt-1 pr-[2px] text-[26px]">1</span>
            <span className="ml-[6px] w-[52px]">of 273</span>
            <span className="ml-[15px] flex"><PageArrow w="18" d="M0 0V28L17 14Z" /></span>
            <span className="ml-[10px] flex"><PageArrow w="26" d="M0 0V28L16 14ZM19 0H25V28H19Z" /></span>
            <span className="ml-[9px]">(1 - 100 of 27,239)</span>
          </div>
          <div className="mr-[6px] ml-auto flex items-start">
            <Funnel className="mt-[9px] mr-[14px] h-[42px] w-[42px]" />
            <span className="mt-[8px] mr-[14px]"><TextIcon /></span>
            <span className="mt-[9px] mr-[15px]"><Floppy /></span>
            <span className="mt-[10px] mr-[15px]"><AddColumn /></span>
            <span className="mt-[8px] mr-[15px]"><InfoIcon /></span>
            <span className="mt-[8px] mr-[12px]"><Gears /></span>
            <span className="mt-[8px]"><Expand /></span>
          </div>
        </div>
        <div className="relative ml-[2px] flex h-[2094px] w-[1625px] flex-col overflow-hidden border-t-2 border-r-2 border-l-2 border-[#a9a9a9] bg-white">
          <div className={`grid h-[120px] shrink-0 ${COLS} border-b-2 border-[#cfcfcf]`}>
            <div className="flex flex-col items-center border-r-[3px] border-[#cfcfcf] bg-linear-to-b from-white to-[#dcdcdc] pt-[6px]">
              <Box />
              <Funnel className="mt-[47px] h-[29px] w-[29px]" />
            </div>
            <HeadCell name="ssObjectId" unit="" type="long" />
            <HeadCell name="e" unit="" type="double" />
            <HeadCell name="incl" unit="(deg)" type="double" />
            <HeadCell name="q" unit="(AU)" type="double" />
            <HeadCell name="mpcH" unit="(mag)" type="float" />
            <div className="bg-[#f5f7f9]" />
          </div>
          {TABLE.map((cells, i) => (
            <Row key={cells[0]} cells={cells} selected={i === 0} />
          ))}
          <Row cells={["", "", "", "", ""]} />
          <div className="absolute top-[128px] right-[6px] h-[957px] w-[14px] rounded-full bg-[#c1c1c1]" />
        </div>
      </div>
    </section>
  );
}

export default function App() {
  return (
    <div className="flex h-[2250px] w-[3812px] flex-col overflow-hidden bg-[#e3e3e3] font-['DejaVu_Sans_Condensed','DejaVu_Sans',sans-serif] text-black">
      <Header />
      <main className="flex min-h-0 flex-1">
        <ChartPanel />
        <TablePanel />
      </main>
    </div>
  );
}
